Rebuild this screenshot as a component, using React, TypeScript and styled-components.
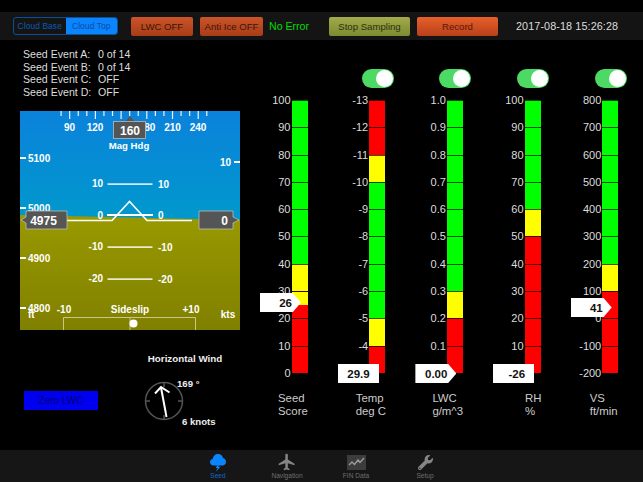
import React from "react"
import styled, {createGlobalStyle} from "styled-components"
import {MdFlight} from "react-icons/md"
import {FaWrench} from "react-icons/fa"

const GlobalStyle = createGlobalStyle`
  html, body {
    margin: 0;
    background: #000;
    overflow: hidden;
  }
  * {
    box-sizing: border-box;
  }
`

const StyledApp = styled.div`
  width: 643px;
  height: 482px;
  padding-top: 12px;
  display: flex;
  flex-direction: column;
  background: #000;
  color: #ddd;
  font-family: "Liberation Sans", Arial, sans-serif;
  overflow: hidden;
`

const StyledToolbar = styled.div`
  height: 28px;
  flex: none;
  padding-left: 13px;
  display: flex;
  align-items: center;
  background: #141414;
`

const StyledSegments = styled.div`
  width: 105px;
  height: 18px;
  display: flex;
  border: 1px solid #0a4f9a;
  border-radius: 3px;
  overflow: hidden;
  margin-right: 13px;
`

const StyledSegment = styled.div<{$active?: boolean}>`
  flex: 1;
  display: flex;
  align-items: center;
  justify-content: center;
  font-size: 8.4px;
  letter-spacing: 0.1px;
  color: ${p => p.$active ? "#0a4c9c" : "#0a5cb4"};
  background: ${p => p.$active ? "#0a84ff" : "transparent"};
`

const StyledButton = styled.div<{$width: number, $top: string, $bottom: string, $ink: string, $gap?: number}>`
  width: ${p => p.$width}px;
  height: 19px;
  margin-right: ${p => p.$gap ?? 7}px;
  display: flex;
  align-items: center;
  justify-content: center;
  border-radius: 2px;
  font-size: 9.6px;
  color: ${p => p.$ink};
  background: linear-gradient(${p => p.$top}, ${p => p.$bottom});
`

const StyledStatus = styled.div`
  width: 60px;
  font-size: 10.6px;
  color: #00dd00;
`

const StyledClock = styled.div`
  margin-left: 18px;
  font-size: 10.8px;
  letter-spacing: 0.1px;
  color: #ddd;
`

const StyledMain = styled.div`
  flex: 1;
  display: flex;
`

const StyledLeft = styled.div`
  width: 254px;
  flex: none;
  display: flex;
  flex-direction: column;
`

const StyledEvents = styled.div`
  margin: 8px 0 12px 23px;
  display: grid;
  grid-template-columns: 75px auto;
  justify-content: start;
  font-size: 10.6px;
  line-height: 12.7px;
  color: #ddd;
`

const StyledInstrument = styled.svg`
  display: block;
  margin-left: 20px;
  width: 220px;
  height: 219px;
`

const StyledInstrumentText = styled.text<{$size?: number}>`
  font-size: ${p => p.$size ?? 10}px;
  font-weight: 700;
  fill: #fff;
`

const StyledBottom = styled.div`
  display: flex;
  padding-left: 24px;
`

const StyledZero = styled.div`
  width: 74px;
  height: 19px;
  margin-top: 61px;
  margin-right: 45px;
  display: flex;
  align-items: center;
  justify-content: center;
  background: #0000f0;
  color: #00006e;
  font-size: 10px;
`

const StyledWind = styled.div`
  width: 84px;
  padding-top: 24px;
`

const StyledWindTitle = styled.div`
  text-align: center;
  font-size: 9.8px;
  font-weight: 700;
  color: #eee;
  line-height: 10px;
  white-space: nowrap;
`

const StyledWindDial = styled.svg`
  display: block;
  width: 84px;
  height: 60px;
  margin-top: 6px;
`

const StyledWindText = styled.text`
  font-size: 9.6px;
  font-weight: 700;
  fill: #eee;
`

const StyledGauges = styled.div`
  display: flex;
`

const StyledGauge = styled.div`
  width: 77.7px;
  flex: none;
  display: flex;
  flex-direction: column;
`

const StyledToggleRow = styled.div`
  height: 19px;
  margin-top: 29px;
  margin-bottom: 12px;
  padding-left: 30px;
`

const StyledToggle = styled.div`
  width: 32px;
  height: 19px;
  padding: 1px;
  display: flex;
  justify-content: flex-end;
  border-radius: 10px;
  background: #4cd964;
`

const StyledKnob = styled.div`
  width: 17px;
  height: 17px;
  border-radius: 50%;
  background: #fff;
`

const StyledTrack = styled.div`
  position: relative;
  height: 273px;
  display: flex;
`

const StyledScale = styled.div`
  width: 37.5px;
  padding-right: 1px;
  flex: none;
  display: flex;
  flex-direction: column;
  justify-content: space-between;
  align-items: flex-end;
  font-size: 11px;
  color: #ddd;
`

const StyledTick = styled.div`
  height: 0;
  line-height: 0;
  white-space: nowrap;
`

const StyledBar = styled.div`
  width: 16px;
  flex: none;
  display: flex;
  flex-direction: column;
`

const StyledSegmentBar = styled.div<{$color: string}>`
  flex: 1;
  background: ${p => p.$color};
  border-top: 1px solid rgba(0, 0, 0, 0.7);
`

const StyledSplitSegment = styled.div`
  flex: 1;
  border-top: 1px solid rgba(0, 0, 0, 0.7);
  background: linear-gradient(#ffff00 50%, #ff0000 50%);
`

const StyledPointer = styled.div<{$top: number, $flat?: boolean}>`
  position: absolute;
  left: 6px;
  top: ${p => p.$top}px;
  width: 41px;
  height: 19px;
  padding-right: 9px;
  display: flex;
  align-items: center;
  justify-content: flex-end;
  background: #fff;
  color: #111;
  font-size: 11.5px;
  font-weight: 700;
  clip-path: ${p => p.$flat ? "none" : "polygon(0 0, 80% 0, 100% 50%, 80% 100%, 0 100%)"};
`

const StyledCaption = styled.div<{$offset: number}>`
  margin-top: 19px;
  padding-left: ${p => p.$offset}px;
  font-size: 11.4px;
  line-height: 13.3px;
  color: #ccc;
`

const StyledTabBar = styled.div`
  height: 32px;
  flex: none;
  display: flex;
  justify-content: center;
  background: #161616;
`

const StyledTab = styled.div<{$active?: boolean}>`
  width: 69px;
  display: flex;
  flex-direction: column;
  align-items: center;
  justify-content: flex-end;
  padding-bottom: 2px;
  font-size: 6.6px;
  line-height: 8px;
  color: ${p => p.$active ? "#0a6ad0" : "#6f6f6f"};
`

const StyledTabIcon = styled.div`
  height: 20px;
  display: flex;
  align-items: center;
  justify-content: center;
  color: #858585;
`

const GREEN = "#00ff00"
const YELLOW = "#ffff00"
const RED = "#ff0000"

const colours = (green: [number, number][], yellow: [number, number][]) =>
    Array.from({length: 10}, (_, i) => {
        if (green.some(([a, b]) => i >= a && i < b)) return GREEN
        if (yellow.some(([a, b]) => i >= a && i < b)) return YELLOW
        return RED
    })

const GAUGES = [
    {
        scale: ["100", "90", "80", "70", "60", "50", "40", "30", "20", "10", "0"],
        segments: null,
        caption: ["Seed", "Score"], offset: 24, value: "26", top: 193, flat: false, toggle: false,
    },
    {
        scale: ["-13", "-12", "-11", "-10", "-9", "-8", "-7", "-6", "-5", "-4", ""],
        segments: colours([[3, 8]], [[2, 3], [8, 9]]),
        caption: ["Temp", "deg C"], offset: 24, value: "29.9", top: 264, flat: true, toggle: true,
    },
    {
        scale: ["1.0", "0.9", "0.8", "0.7", "0.6", "0.5", "0.4", "0.3", "0.2", "0.1", ""],
        segments: colours([[0, 7]], [[7, 8]]),
        caption: ["LWC", "g/m^3"], offset: 23, value: "0.00", top: 264, flat: false, toggle: true,
    },
    {
        scale: ["100", "90", "80", "70", "60", "50", "40", "30", "20", "10", ""],
        segments: colours([[0, 4]], [[4, 5]]),
        caption: ["RH", "%"], offset: 38, value: "-26", top: 264, flat: true, toggle: true,
    },
    {
        scale: ["800", "700", "600", "500", "400", "300", "200", "100", "0", "-100", "-200"],
        segments: colours([[0, 6]], [[6, 7]]),
        caption: ["VS", "ft/min"], offset: 25, value: "41", top: 198, flat: false, toggle: true,
    },
]

const Bar: React.FC<{segments: string[] | null}> = ({segments}) => {
    if (segments) {
        return <StyledBar>{segments.map((c, i) => <StyledSegmentBar key={i} $color={c}/>)}</StyledBar>
    }
    // seed score changes colour half way through a segment
    const fine = Array.from({length: 10}, (_, i) => i < 6 ? GREEN : i < 7 ? YELLOW : i === 7 ? "split" : RED)
    return (
        <StyledBar>
            {fine.map((c, i) => c === "split"
                ? <StyledSplitSegment key={i}/>
                : <StyledSegmentBar key={i} $color={c}/>)}
        </StyledBar>
    )
}

const Gauge: React.FC<typeof GAUGES[number]> = ({scale, segments, caption, offset, value, top, flat, toggle}) => (
    <StyledGauge>
        <StyledToggleRow>
            {toggle && <StyledToggle><StyledKnob/></StyledToggle>}
        </StyledToggleRow>
        <StyledTrack>
            <StyledScale>
                {scale.map((t, i) => <StyledTick key={i}>{t}</StyledTick>)}
            </StyledScale>
            <Bar segments={segments}/>
            <StyledPointer $top={top} $flat={flat}>{value}</StyledPointer>
        </StyledTrack>
        <StyledCaption $offset={offset}>
            {caption[0]}<br/>{caption[1]}
        </StyledCaption>
    </StyledGauge>
)

// offsets below are in the instrument's own coordinates (page minus 20, 111)
const Instrument = () => {
    const ticks = Array.from({length: 18}, (_, i) => 41 + i * 8.57)
    const alt = [["5100", 47], ["5000", 97], ["4900", 147], ["4800", 197]] as const
    const ladder = [[73, "10"], [136, "-10"], [168, "-20"]] as const
    return (
        <StyledInstrument viewBox="0 0 220 219">
            <defs>
                <linearGradient id="sky" x1="0" y1="0" x2="0" y2="1">
                    <stop offset="0" stopColor="#0b82db"/>
                    <stop offset="1" stopColor="#0099cc"/>
                </linearGradient>
                <linearGradient id="ground" x1="0" y1="0" x2="0" y2="1">
                    <stop offset="0" stopColor="#999900"/>
                    <stop offset="1" stopColor="#808000"/>
                </linearGradient>
            </defs>
            <rect width="220" height="110" fill="url(#sky)"/>
            <polygon points="0,104 220,109 220,219 0,219" fill="url(#ground)"/>

            {ticks.map((x, i) => (
                <rect key={i} x={x - 0.5} y="0" width="1.2" height={i % 3 === 1 ? 8 : 5} fill="#e8f4ff"/>
            ))}
            {[["90", 49.5], ["120", 75], ["180", 127], ["210", 152.5], ["240", 178]].map(([t, x]) => (
                <StyledInstrumentText key={t} x={x} y="20" textAnchor="middle" $size={10}>{t}</StyledInstrumentText>
            ))}
            <polygon points="110,5 115,11 105,11" fill="#555"/>
            <rect x="93.5" y="10.5" width="32" height="17" fill="#555" stroke="#bbb" strokeWidth="0.8"/>
            <StyledInstrumentText x="110" y="24" textAnchor="middle" $size={12}>160</StyledInstrumentText>
            <StyledInstrumentText x="109" y="37.5" textAnchor="middle" $size={9.6}>Mag Hdg</StyledInstrumentText>

            {alt.map(([t, y]) => (
                <g key={t}>
                    <rect x="0" y={y - 1} width="6" height="2" fill="#fff"/>
                    <StyledInstrumentText x="8" y={y + 3.5}>{t}</StyledInstrumentText>
                </g>
            ))}
            <rect x="214" y="50" width="6" height="2" fill="#fff"/>
            <StyledInstrumentText x="200" y="54.5">10</StyledInstrumentText>

            {ladder.map(([y, t]) => (
                <g key={t}>
                    <rect x="87.5" y={y - 0.6} width="45" height="1.4" fill="#fff"/>
                    <StyledInstrumentText x="83" y={y + 3} textAnchor="end">{t}</StyledInstrumentText>
                    <StyledInstrumentText x="138" y={y + 4}>{t}</StyledInstrumentText>
                </g>
            ))}
            <rect x="87" y="103" width="46" height="2" fill="#fff"/>
            <StyledInstrumentText x="83" y="107.5" textAnchor="end">0</StyledInstrumentText>
            <StyledInstrumentText x="138" y="108">0</StyledInstrumentText>
            <polyline
                points="38,109.5 92,109.5 109.5,90.5 127,109.5 172,109.5"
                fill="none" stroke="#fff" strokeWidth="1.6"/>

            <polygon points="6,100 47,100 47,118 6,118 6,112 1,109 6,106" fill="#555" stroke="#bbb" strokeWidth="0.8"/>
            <StyledInstrumentText x="23.5" y="113.5" textAnchor="middle" $size={12}>4975</StyledInstrumentText>
            <polygon points="179,100 213,100 213,106 219,109 213,112 213,118 179,118" fill="#555" stroke="#bbb" strokeWidth="0.8"/>
            <StyledInstrumentText x="208" y="113.5" textAnchor="end" $size={12}>0</StyledInstrumentText>

            <StyledInstrumentText x="8" y="206.5">ft</StyledInstrumentText>
            <StyledInstrumentText x="44" y="202" textAnchor="middle">-10</StyledInstrumentText>
            <StyledInstrumentText x="110" y="202" textAnchor="middle">Sideslip</StyledInstrumentText>
            <StyledInstrumentText x="171" y="202" textAnchor="middle">+10</StyledInstrumentText>
            <StyledInstrumentText x="208" y="207" textAnchor="middle">kts</StyledInstrumentText>
            <path d="M43.5 219 V206.5 H175.5 V219 M110 206.5 V219" fill="none" stroke="#c8c88a" strokeWidth="1"/>
            <circle cx="113.5" cy="212.5" r="4" fill="#fff"/>
        </StyledInstrument>
    )
}

const WindDial = () => (
    <StyledWindDial viewBox="0 0 84 60">
        <circle cx="21" cy="31" r="18.5" fill="none" stroke="#555" strokeWidth="1.5"/>
        <path d="M21 12.5 V17 M21 45 V49.5 M2.5 31 H7 M35 31 H39.5" stroke="#555" strokeWidth="1.5"/>
        <path d="M23.5 47 L18 17.5" stroke="#fff" strokeWidth="2" fill="none"/>
        <path d="M12 23.5 L18 17 L26.5 22.5" stroke="#fff" strokeWidth="2" fill="none"/>
        <StyledWindText x="34" y="16.5">169 °</StyledWindText>
        <StyledWindText x="39" y="54.5">6 knots</StyledWindText>
    </StyledWindDial>
)

const CloudIcon = () => (
    <svg width="16" height="19" viewBox="0 0 16 19">
        <path d="M3.6 12.5 C1.4 12.5 0 11 0 9.2 C0 7.5 1.2 6.2 2.8 6 C3 3 5.3 1 8 1 C10.5 1 12.5 2.6 13 4.9 C14.8 5.3 16 6.9 16 8.8 C16 10.9 14.5 12.5 12.4 12.5 Z" fill="#0a84ff"/>
        <path d="M9 10.5 L5.5 15 H7.6 L6 18.8 L10.4 13.8 H8.2 L10 10.5 Z" fill="#0a84ff"/>
    </svg>
)

const ChartIcon = () => (
    <svg width="19" height="15" viewBox="0 0 19 15">
        <rect width="19" height="15" fill="#3c3c3c"/>
        <path d="M2 10 L5 7 L7.5 9.5 L11 5 L13 7.5 L17 3" fill="none" stroke="#9a9a9a" strokeWidth="1.4"/>
    </svg>
)

const App = () => (
    <StyledApp>
        <GlobalStyle/>
        <StyledToolbar>
            <StyledSegments>
                <StyledSegment>Cloud Base</StyledSegment>
                <StyledSegment $active>Cloud Top</StyledSegment>
            </StyledSegments>
            <StyledButton $width={62} $top="#cc5428" $bottom="#a83c18" $ink="#3a1608">LWC OFF</StyledButton>
            <StyledButton $width={63} $top="#cc5428" $bottom="#a83c18" $ink="#3a1608" $gap={6}>Anti Ice OFF</StyledButton>
            <StyledStatus>No Error</StyledStatus>
            <StyledButton $width={81} $top="#a3ab4a" $bottom="#7d8a30" $ink="#2b3010" $gap={7}>Stop Sampling</StyledButton>
            <StyledButton $width={81} $top="#e8602a" $bottom="#b8401a" $ink="#5a1808" $gap={0}>Record</StyledButton>
            <StyledClock>2017-08-18 15:26:28</StyledClock>
        </StyledToolbar>
        <StyledMain>
            <StyledLeft>
                <StyledEvents>
                    <span>Seed Event A:</span><span>0 of 14</span>
                    <span>Seed Event B:</span><span>0 of 14</span>
                    <span>Seed Event C:</span><span>OFF</span>
                    <span>Seed Event D:</span><span>OFF</span>
                </StyledEvents>
                <Instrument/>
                <StyledBottom>
                    <StyledZero>Zero LWC</StyledZero>
                    <StyledWind>
                        <StyledWindTitle>Horizontal Wind</StyledWindTitle>
                        <WindDial/>
                    </StyledWind>
                </StyledBottom>
            </StyledLeft>
            <StyledGauges>
                {GAUGES.map(g => <Gauge key={g.caption[0]} {...g}/>)}
            </StyledGauges>
        </StyledMain>
        <StyledTabBar>
            <StyledTab $active><StyledTabIcon><CloudIcon/></StyledTabIcon>Seed</StyledTab>
            <StyledTab><StyledTabIcon><MdFlight size={20}/></StyledTabIcon>Navigation</StyledTab>
            <StyledTab><StyledTabIcon><ChartIcon/></StyledTabIcon>FIN Data</StyledTab>
            <StyledTab><StyledTabIcon><FaWrench size={15}/></StyledTabIcon>Setup</StyledTab>
        </StyledTabBar>
    </StyledApp>
)

export default App
